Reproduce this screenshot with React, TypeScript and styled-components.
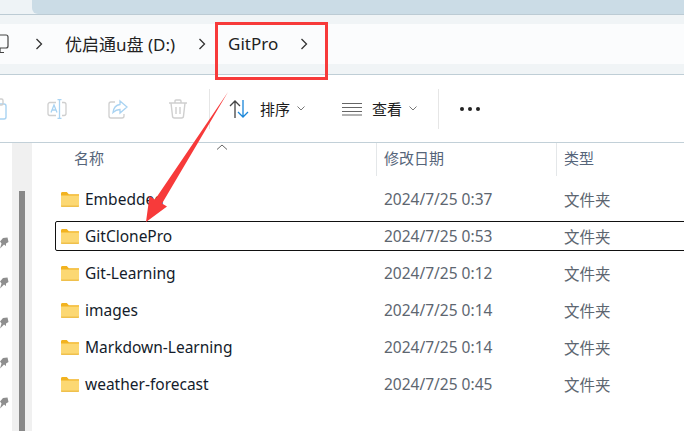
import styled, { createGlobalStyle } from 'styled-components';

const GlobalStyle = createGlobalStyle`
  html, body {
    margin: 0;
    padding: 0;
    background: #fff;
  }
  * {
    box-sizing: border-box;
  }
`;

const folders = [
  { name: 'Embedded', date: '2024/7/25 0:37' },
  { name: 'GitClonePro', date: '2024/7/25 0:53', selected: true },
  { name: 'Git-Learning', date: '2024/7/25 0:12' },
  { name: 'images', date: '2024/7/25 0:14' },
  { name: 'Markdown-Learning', date: '2024/7/25 0:14' },
  { name: 'weather-forecast', date: '2024/7/25 0:45' },
];

const FolderIcon = () => (
  <svg width="18" height="15" viewBox="0 0 18 15">
    <path d="M0 1.500C0 .7.6 0 1.400 0h4.400l2 2.200H18V4H0z" fill="#f2b320" />
    <path d="M0 3.600h18V14a1 1 0 0 1-1 1H1a1 1 0 0 1-1-1z" fill="#fcd873" />
    <path d="M0 13.600h18V14a1 1 0 0 1-1 1H1a1 1 0 0 1-1-1z" fill="#efc04d" />
  </svg>
);

const Chevron = () => (
  <svg width="8" height="12" viewBox="0 0 8 12">
    <path d="M1.500 1l5 5-5 5" fill="none" stroke="#333" strokeWidth="1.3" />
  </svg>
);

const SmallChevron = () => (
  <svg width="8" height="5" viewBox="0 0 8 5">
    <path d="M.5.5L4 4 7.500.5" fill="none" stroke="#777" strokeWidth="1" />
  </svg>
);

const Pin = () => (
  <svg width="9" height="12" viewBox="0 0 9 12">
    <path d="M0 4.500L3 1l4.500-.5 1 4.500-2.500 1.500V9L4 7.500 0 11.500l1.500-5z" fill="#8e8e8e" />
  </svg>
);

export default function App() {
  return (
    <Page>
      <GlobalStyle />
      <TabStrip>
        <ActiveTab />
      </TabStrip>
      <AddressArea>
        <AddressBar>
          <ComputerIcon width="17" height="22" viewBox="0 0 17 22">
            <rect x="1" y="2" width="15" height="13" rx="2" fill="none" stroke="#444" strokeWidth="1.2" />
            <path d="M8 15v4M4 19.500h8" stroke="#444" strokeWidth="1.2" />
          </ComputerIcon>
          <Crumb $left={26}><Chevron /></Crumb>
          <CrumbText $left={22}>优启通u盘 (D:)</CrumbText>
          <Crumb $left={23}><Chevron /></Crumb>
          <CrumbText $left={22}>GitPro</CrumbText>
          <Crumb $left={22}><Chevron /></Crumb>
        </AddressBar>
      </AddressArea>
      <Toolbar>
        <ToolIconClipped width="10" height="22" viewBox="0 0 10 22">
          <rect x="-6" y="6" width="12" height="15" rx="2" fill="none" stroke="#a9d3f2" strokeWidth="1.4" />
          <rect x="-4" y="1" width="7" height="6" rx="1.500" fill="none" stroke="#cfcfcf" strokeWidth="1.4" />
        </ToolIconClipped>
        <ToolIcon $left={37} width="20" height="20" viewBox="0 0 20 20">
          <path d="M9 3.500H3a2 2 0 0 0-2 2v9a2 2 0 0 0 2 2h6M15 3.500h2a2 2 0 0 1 2 2v9a2 2 0 0 1-2 2h-2" fill="none" stroke="#cfcfcf" strokeWidth="1.3" />
          <path d="M4 13.500L7 6l3 7.500M5 11h4M10.500.7h4M10.500 19.300h4M12.500.7v18.600" fill="none" stroke="#a9d3f2" strokeWidth="1.3" />
        </ToolIcon>
        <ToolIcon $left={41} width="20" height="20" viewBox="0 0 20 20">
          <path d="M7 3H3a2 2 0 0 0-2 2v12a2 2 0 0 0 2 2h11a2 2 0 0 0 2-2v-2" fill="none" stroke="#cfcfcf" strokeWidth="1.3" />
          <path d="M12 2l7 6-7 6v-3.500c-3 0-5 1-7 3 .5-4 3-7.500 7-8z" fill="none" stroke="#a9d3f2" strokeWidth="1.3" />
        </ToolIcon>
        <ToolIcon $left={40} width="20" height="20" viewBox="0 0 20 20">
          <path d="M1 4h18M7 4V2a1 1 0 0 1 1-1h4a1 1 0 0 1 1 1v2M3 4l1.500 13a2 2 0 0 0 2 2h7a2 2 0 0 0 2-2L17 4M8 8v7M12 8v7" fill="none" stroke="#cfcfcf" strokeWidth="1.4" />
        </ToolIcon>
        <ToolSeparator $left={21} />
        <ToolIcon $left={19} width="21" height="20" viewBox="0 0 21 20">
          <path d="M6 19V2M1 7l5-5 5 5" fill="none" stroke="#444" strokeWidth="1.3" />
          <path d="M14 1v17M9 13l5 5 5-5" fill="none" stroke="#1a86d9" strokeWidth="1.3" />
        </ToolIcon>
        <ToolLabel $left={10}>排序</ToolLabel>
        <ToolChevron><SmallChevron /></ToolChevron>
        <ToolIcon $left={37} width="20" height="14" viewBox="0 0 20 14">
          <path d="M0 1.500h20M0 5.500h20M0 9.500h20M0 13h20" stroke="#666" strokeWidth="1.2" />
        </ToolIcon>
        <ToolLabel $left={10}>查看</ToolLabel>
        <ToolChevron><SmallChevron /></ToolChevron>
        <ToolSeparator $left={21} />
        <Dots>
          <i />
          <i />
          <i />
        </Dots>
      </Toolbar>
      <Body>
        <Sidebar>
          <PinColumn>
            {[0, 1, 2, 3, 4].map((i) => (
              <Pin key={i} />
            ))}
          </PinColumn>
          <ScrollTrack>
            <ScrollThumb />
          </ScrollTrack>
        </Sidebar>
        <Main>
          <SortCaret width="12" height="6" viewBox="0 0 12 6">
            <path d="M1 5.500L6 1l5 4.500" fill="none" stroke="#666" strokeWidth="1" />
          </SortCaret>
          <HeaderRow>
            <HeaderCell>名称</HeaderCell>
            <HeaderCell>修改日期</HeaderCell>
            <HeaderCell>类型</HeaderCell>
          </HeaderRow>
          <FileList>
            {folders.map((folder) => (
              <FileRow key={folder.name} $selected={folder.selected}>
                <NameCell>
                  <FolderIcon />
                  <span>{folder.name}</span>
                </NameCell>
                <InfoCell>{folder.date}</InfoCell>
                <InfoCell>文件夹</InfoCell>
              </FileRow>
            ))}
          </FileList>
        </Main>
      </Body>
      <RedBox />
      <Arrow width="684" height="431" viewBox="0 0 684 431">
        <path d="M228 92L162 203.500 167 206.500 146 222 149.500 196 155 199.500z" fill="#f73a3a" />
      </Arrow>
    </Page>
  );
}

const Page = styled.div`
  position: relative;
  display: flex;
  flex-direction: column;
  width: 684px;
  height: 431px;
  overflow: hidden;
  background: #fff;
  font-family: 'Noto Sans', 'Noto Sans CJK SC', sans-serif;
`;

const TabStrip = styled.div`
  display: flex;
  height: 15px;
  padding-left: 32px;
  background: #eef3f6;
  border-bottom: 1px solid #bccbd4;
`;

const ActiveTab = styled.div`
  flex: 1;
  background: #cbdce6;
  border-bottom-left-radius: 6px;
`;

const AddressArea = styled.div`
  height: 60px;
  padding: 9px 0 10px;
  background: #f0f4f6;
  border-bottom: 1px solid #bfced6;
`;

const AddressBar = styled.div`
  display: flex;
  align-items: center;
  height: 40px;
  background: #fbfcfd;
`;

const ComputerIcon = styled.svg`
  flex: none;
  margin-left: -8px;
`;

const Crumb = styled.span<{ $left: number }>`
  display: flex;
  margin-left: ${({ $left }) => $left}px;
`;

const CrumbText = styled.span<{ $left: number }>`
  margin-left: ${({ $left }) => $left}px;
  margin-top: -2px;
  font-size: 17px;
  color: #222;
  white-space: nowrap;
`;

const Toolbar = styled.div`
  display: flex;
  align-items: center;
  height: 68px;
  background: #fff;
  border-bottom: 1px solid #c2d0d8;
`;

const ToolIconClipped = styled.svg`
  flex: none;
`;

const ToolIcon = styled.svg<{ $left: number }>`
  flex: none;
  margin-left: ${({ $left }) => $left}px;
`;

const ToolSeparator = styled.div<{ $left: number }>`
  flex: none;
  width: 1px;
  height: 40px;
  margin-left: ${({ $left }) => $left}px;
  background: #e6e6e6;
`;

const ToolLabel = styled.span<{ $left: number }>`
  margin-left: ${({ $left }) => $left}px;
  font-size: 15px;
  color: #1c1c1c;
`;

const ToolChevron = styled.span`
  display: flex;
  margin-left: 7px;
`;

const Dots = styled.div`
  display: flex;
  gap: 4px;
  margin-left: 21px;

  i {
    width: 4px;
    height: 4px;
    border-radius: 50%;
    background: #222;
  }
`;

const Body = styled.div`
  display: flex;
  flex: 1;
  min-height: 0;
`;

const Sidebar = styled.div`
  display: flex;
  flex: none;
  width: 34px;
`;

const PinColumn = styled.div`
  display: flex;
  flex: none;
  flex-direction: column;
  gap: 28px;
  width: 12px;
  padding-top: 94px;
`;

const ScrollTrack = styled.div`
  flex: none;
  width: 20px;
  padding: 48px 7px 0 7px;
  background: #f0f0f0;
`;

const ScrollThumb = styled.div`
  height: 100%;
  background: #888;
`;

const Main = styled.div`
  position: relative;
  flex: 1;
  min-width: 0;
`;

const SortCaret = styled.svg`
  position: absolute;
  top: 1px;
  left: 182px;
`;

const HeaderRow = styled.div`
  display: grid;
  grid-template-columns: 343px 180px 1fr;
  height: 33px;
`;

const HeaderCell = styled.div`
  padding-left: 7px;
  font-size: 15px;
  line-height: 31px;
  color: #56657a;
  border-right: 1px solid #e4e7e9;

  &:first-child {
    padding-left: 40px;
  }

  &:last-child {
    border-right: 0;
  }
`;

const FileList = styled.div`
  display: flex;
  flex-direction: column;
  gap: 7px;
  padding: 8px 0 0 21px;
`;

const FileRow = styled.div<{ $selected?: boolean }>`
  display: grid;
  grid-template-columns: 322px 180px 1fr;
  align-items: center;
  width: 640px;
  height: 30px;
  border: 1px solid ${({ $selected }) => ($selected ? '#111' : 'transparent')};
  border-radius: 2px;
  font-size: 15.500px;
`;

const NameCell = styled.div`
  display: flex;
  align-items: center;
  gap: 6px;
  padding-left: 5px;
  color: #141c2b;
  white-space: nowrap;
`;

const InfoCell = styled.div`
  padding-left: 6px;
  font-size: 15.500px;
  color: #5d6670;
`;

const RedBox = styled.div`
  position: absolute;
  top: 22px;
  left: 215px;
  width: 113px;
  height: 58px;
  border: 3px solid #f73a3a;
`;

const Arrow = styled.svg`
  position: absolute;
  top: 0;
  left: 0;
  pointer-events: none;
`;
